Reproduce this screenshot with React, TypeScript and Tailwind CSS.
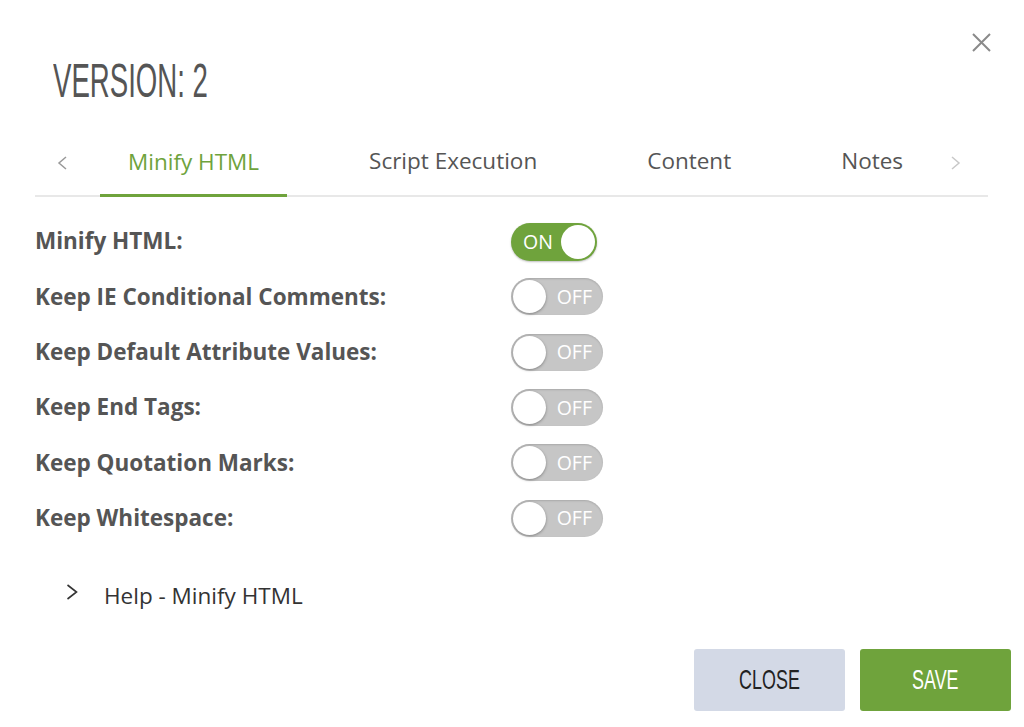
import React from "react";

const cond = { fontFamily: '"Liberation Sans Narrow", "Liberation Sans", sans-serif' };

function Toggle({ on }: { on: boolean }) {
  if (on) {
    return (
      <div className="flex items-center h-[38px] w-[86px] rounded-full bg-[#6fa33c] pl-[12px] pr-[2px] justify-between shadow-[0_1px_2px_rgba(0,0,0,0.25)]">
        <span className="text-white text-[19.5px] leading-none">ON</span>
        <span className="w-[34px] h-[34px] rounded-full bg-white" />
      </div>
    );
  }
  return (
    <div className="flex items-center h-[37px] w-[92px] rounded-full bg-[#c6c6c6] pl-[2px] pr-[11px] justify-between shadow-[inset_0_1px_2px_rgba(0,0,0,0.15)]">
      <span className="w-[33px] h-[33px] rounded-full bg-white shadow-[0_1px_3px_rgba(0,0,0,0.35)]" />
      <span className="text-white text-[19.5px] leading-none">OFF</span>
    </div>
  );
}

const rows: [string, boolean][] = [
  ["Minify HTML:", true],
  ["Keep IE Conditional Comments:", false],
  ["Keep Default Attribute Values:", false],
  ["Keep End Tags:", false],
  ["Keep Quotation Marks:", false],
  ["Keep Whitespace:", false],
];

export default function App() {
  return (
    <div
      className="w-[1024px] h-[727px] bg-white relative overflow-hidden"
      style={{ fontFamily: '"Open Sans", sans-serif' }}
    >
      <button className="absolute left-[972px] top-[33px] w-[19px] h-[19px]">
        <svg viewBox="0 0 19 19" width="19" height="19">
          <path d="M1 1 L18 18 M18 1 L1 18" stroke="#8a8a8a" strokeWidth="2" fill="none" />
        </svg>
      </button>

      <div className="flex flex-col pl-[35px] pr-[36px]">
        <div className="h-[60px] mt-[51px] mb-[4px] flex items-center pl-[18px]">
          <span
            className="inline-block text-[48px] leading-none text-[#555] origin-left scale-x-[0.575] whitespace-nowrap"
            style={cond}
          >
            VERSION: 2
          </span>
        </div>

        <div className="mt-[17px] flex items-stretch h-[65px] border-b-2 border-[#e8e8e8]">
          <div className="w-[65px] flex items-center justify-center">
            <svg viewBox="0 0 10 14" width="10" height="14" className="ml-[-12px] mt-[-2px]">
              <path d="M9 1 L2 7 L9 13" stroke="#999" strokeWidth="1.5" fill="none" />
            </svg>
          </div>
          <div className="flex gap-[54px] text-[22.5px] text-[#555]">
            <div className="px-[28px] flex items-center pb-[3px] border-b-[3px] border-[#6fa33c] mb-[-2px] text-[#6fa33c]">
              Minify HTML
            </div>
            <div className="px-[28px] flex items-center pb-[6px]">Script Execution</div>
            <div className="px-[28px] flex items-center pb-[6px]">Content</div>
            <div className="px-[28px] flex items-center pb-[6px]">Notes</div>
          </div>
          <div className="flex-1 flex items-center justify-start pl-[20px]">
            <svg viewBox="0 0 10 14" width="10" height="14" className="mt-[-2px]">
              <path d="M1 1 L8 7 L1 13" stroke="#c8c8c8" strokeWidth="1.5" fill="none" />
            </svg>
          </div>
        </div>

        <div className="mt-[17px] flex flex-col">
          {rows.map(([label, on]) => (
            <div key={label} className="h-[55.3px] flex items-center">
              <div className="w-[476px] text-[22.5px] font-bold text-[#555] leading-none">{label}</div>
              <Toggle on={on} />
            </div>
          ))}
        </div>

        <div className="mt-[35px] flex items-center h-[30px] pl-[31px]">
          <svg viewBox="0 0 12 16" width="12" height="16" className="mt-[-8px]">
            <path d="M1.5 1 L10.5 8 L1.5 15" stroke="#333" strokeWidth="1.6" fill="none" />
          </svg>
          <span className="ml-[26px] text-[22.5px] text-[#333]">Help - Minify HTML</span>
        </div>
      </div>

      <div className="absolute right-[13px] bottom-[16px] flex gap-[15px]">
        <button className="w-[151px] h-[62px] rounded-[3px] bg-[#d3d9e6] flex items-center justify-center">
          <span className="inline-block text-[28px] leading-none text-[#222] scale-x-[0.64]" style={cond}>
            CLOSE
          </span>
        </button>
        <button className="w-[151px] h-[62px] rounded-[3px] bg-[#6fa33c] flex items-center justify-center">
          <span className="inline-block text-[28px] leading-none text-white scale-x-[0.64]" style={cond}>
            SAVE
          </span>
        </button>
      </div>
    </div>
  );
}
